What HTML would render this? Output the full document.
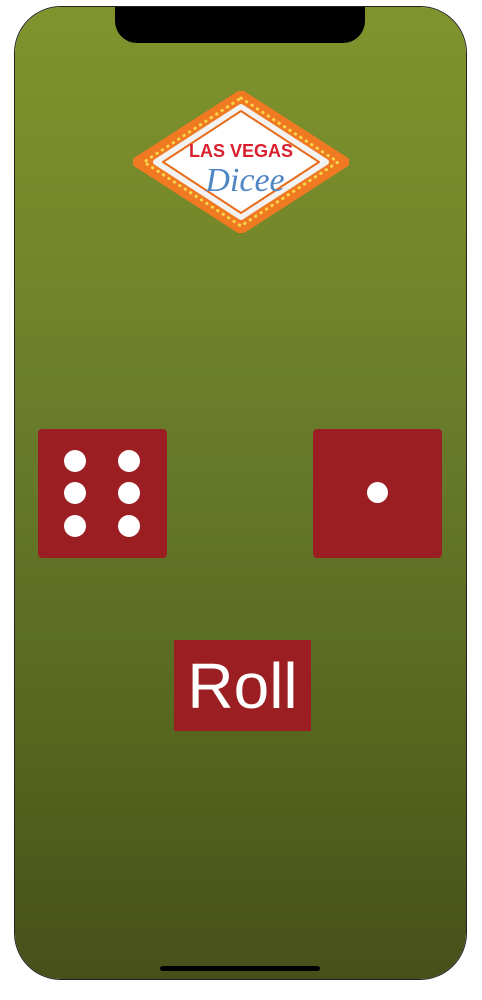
<!DOCTYPE html>
<html><head><style>
html,body{margin:0;padding:0;background:#fff;width:482px;height:1000px;overflow:hidden}
.phone{position:absolute;left:15px;top:7px;width:451px;height:972px;border-radius:46px;overflow:hidden;
background:linear-gradient(180deg,#7f932d 0%,#74872a 25%,#65772a 50%,#56661f 75%,#475019 100%);
box-shadow:0 0 0 1px #222}
.notch{position:absolute;left:100px;top:0;width:250px;height:36px;background:#000;border-radius:0 0 22px 22px}
.home{position:absolute;left:145px;top:959px;width:160px;height:5px;border-radius:3px;background:#000}
.die{position:absolute;width:129px;height:129px;background:#9b1f22;border-radius:4px}
.pip{position:absolute;width:22px;height:22px;border-radius:50%;background:#fff}
.roll{position:absolute;left:159px;top:633px;width:137px;height:91px;background:#9b1f22;color:#fff;
font-family:"Liberation Sans",sans-serif;font-size:64px;text-align:center;line-height:93px}
</style></head><body>
<div class="phone">
<div class="notch"></div>
<svg style="position:absolute;left:118px;top:84px" width="216" height="142" viewBox="0 0 216 142">
<polygon points="108,4 212,71 108,138 4,71" fill="#ef7a22" stroke="#ef7a22" stroke-width="10" stroke-linejoin="round"/>
<polygon points="108,7 205,71 108,135 11,71" fill="none" stroke="#f7d54a" stroke-width="3" stroke-dasharray="0.5 6" stroke-linecap="round" stroke-linejoin="round"/>
<polygon points="108,16 193,71 108,126 23,71" fill="#f2f2f2" stroke="#f2f2f2" stroke-width="6" stroke-linejoin="round"/>
<polygon points="108,20 186,71 108,122 30,71" fill="#fff" stroke="#e86d1c" stroke-width="2" stroke-linejoin="round"/>
<text x="108" y="66" text-anchor="middle" font-family="Liberation Sans,sans-serif" font-weight="bold" font-size="18" fill="#d8202e">LAS VEGAS</text>
<text x="112" y="100" text-anchor="middle" font-family="Liberation Serif,serif" font-style="italic" font-size="34" fill="#4f86c4">Dicee</text>
</svg>
<div class="die" style="left:23px;top:422px">
<div class="pip" style="left:26px;top:21px"></div><div class="pip" style="left:80px;top:21px"></div>
<div class="pip" style="left:26px;top:53px"></div><div class="pip" style="left:80px;top:53px"></div>
<div class="pip" style="left:26px;top:86px"></div><div class="pip" style="left:80px;top:86px"></div>
</div>
<div class="die" style="left:298px;top:422px">
<div class="pip" style="left:54px;top:53px;width:21px;height:21px"></div>
</div>
<div class="roll">Roll</div>
<div class="home"></div>
</div>
</body></html>
